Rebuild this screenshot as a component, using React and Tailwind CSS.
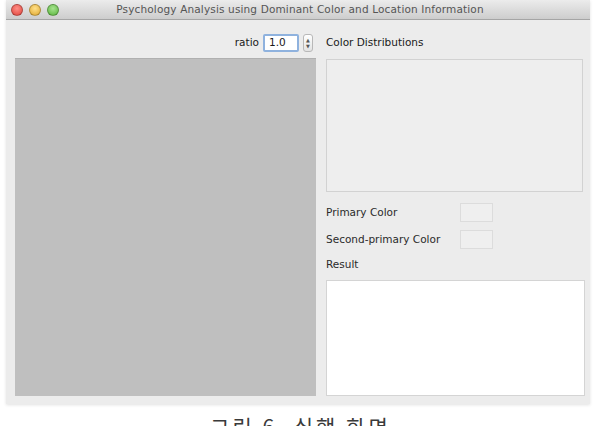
import React from 'react';

const ui = { fontFamily: '"DejaVu Sans", "Liberation Sans", sans-serif' };

function Light({ color }) {
    return (
        <span
            className="inline-block w-[12px] h-[12px] rounded-full border border-black/25"
            style={{ background: color }}
        />
    );
}

function Swatch() {
    return <div className="w-[33px] h-[19px] border border-[#dcdcdc] bg-[#efefef]" />;
}

export default function App() {
    return (
        <div className="w-[593px] h-[426px] bg-white overflow-hidden" style={ui}>
            <div className="ml-[6px] w-[584px] h-[404px] bg-[#ececec] flex flex-col shadow-[0_1px_3px_rgba(0,0,0,0.12)]">
                {/* title bar */}
                <div className="h-[20px] flex items-center px-[5px] bg-gradient-to-b from-[#ececec] to-[#cdcdcd] border-b border-[#a5a5a5] relative">
                    <div className="flex gap-[6px]">
                        <Light color="radial-gradient(circle at 50% 35%, #ff8e86, #e0443b)" />
                        <Light color="radial-gradient(circle at 50% 35%, #ffe08a, #e0a830)" />
                        <Light color="radial-gradient(circle at 50% 35%, #a6e38f, #5ab53c)" />
                    </div>
                    <div className="absolute inset-0 flex items-center justify-center text-[10.5px] tracking-[0.15px] text-[#555] pl-[4px]">
                        Psychology Analysis using Dominant Color and Location Information
                    </div>
                </div>

                {/* body */}
                <div className="flex-1 flex pl-[9px] pr-[5px] pt-[14px] pb-[8px] gap-[10px]">
                    <div className="w-[301px] flex flex-col">
                        <div className="h-[18px] flex items-center justify-end pr-[3px] gap-[4px]">
                            <span className="text-[10.5px] text-[#1a1a1a]">ratio</span>
                            <div className="h-[18px] w-[36px] bg-white border-2 border-[#8fb2de] rounded-[2px] flex items-center pl-[4px] text-[10.5px] text-[#1a1a1a]">
                                1.0
                            </div>
                            <div className="h-[18px] w-[10px] border border-[#b8b8b8] rounded-[3px] bg-gradient-to-b from-white to-[#e2e2e2] flex flex-col items-center justify-center text-[5px] leading-[6px] text-[#555]">
                                <span>▲</span>
                                <span>▼</span>
                            </div>
                        </div>
                        <div className="mt-[6px] flex-1 bg-[#bfbfbf] border-t border-[#b0b0b0]" />
                    </div>

                    <div className="flex-1 flex flex-col">
                        <div className="h-[18px] flex items-center text-[10.5px] text-[#1a1a1a]">Color Distributions</div>
                        <div className="mt-[7px] h-[133px] w-[257px] border border-[#d2d2d2] bg-[#eeeeee]" />
                        <div className="mt-[11px] h-[19px] flex items-center">
                            <span className="w-[134px] text-[10.5px] text-[#2a2a2a]">Primary Color</span>
                            <Swatch />
                        </div>
                        <div className="mt-[8px] h-[19px] flex items-center">
                            <span className="w-[134px] text-[10.5px] text-[#2a2a2a]">Second-primary Color</span>
                            <Swatch />
                        </div>
                        <div className="mt-[8px] h-[16px] flex items-center text-[10.5px] text-[#2a2a2a]">Result</div>
                        <div className="mt-[7px] flex-1 bg-white border border-[#d4d4d4]" />
                    </div>
                </div>
            </div>
            <div
                className="text-center text-[21px] leading-[24px] tracking-[3px] text-[#3a3a3a] mt-[10px] pl-[8px]"
                style={{ fontFamily: '"Noto Sans CJK KR", "Liberation Sans", sans-serif' }}
            >
                그림 6. 실행 화면
            </div>
        </div>
    );
}
